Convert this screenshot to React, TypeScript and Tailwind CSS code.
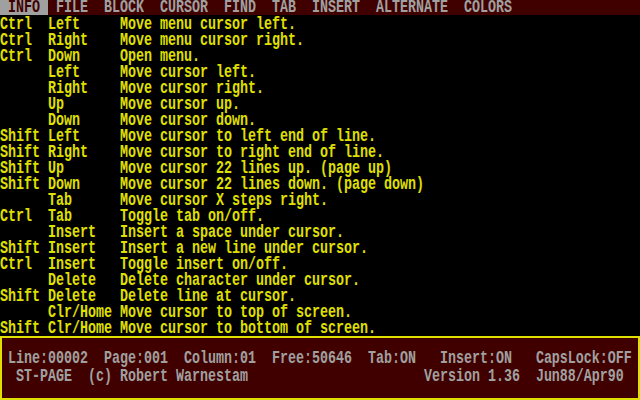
import React from "react";

const lines: string[] = [
  "Ctrl  Left     Move menu cursor left.",
  "Ctrl  Right    Move menu cursor right.",
  "Ctrl  Down     Open menu.",
  "      Left     Move cursor left.",
  "      Right    Move cursor right.",
  "      Up       Move cursor up.",
  "      Down     Move cursor down.",
  "Shift Left     Move cursor to left end of line.",
  "Shift Right    Move cursor to right end of line.",
  "Shift Up       Move cursor 22 lines up. (page up)",
  "Shift Down     Move cursor 22 lines down. (page down)",
  "      Tab      Move cursor X steps right.",
  "Ctrl  Tab      Toggle tab on/off.",
  "      Insert   Insert a space under cursor.",
  "Shift Insert   Insert a new line under cursor.",
  "Ctrl  Insert   Toggle insert on/off.",
  "      Delete   Delete character under cursor.",
  "Shift Delete   Delete line at cursor.",
  "      Clr/Home Move cursor to top of screen.",
  "Shift Clr/Home Move cursor to bottom of screen.",
];

const menuRest = "FILE  BLOCK  CURSOR  FIND  TAB  INSERT  ALTERNATE  COLORS";

const status1 =
  " Line:00002  Page:001  Column:01  Free:50646  Tab:ON   Insert:ON   CapsLock:OFF";
const status2 =
  "  ST-PAGE  (c) Robert Warnestam                      Version 1.36  Jun88/Apr90";

function Line({ text, cls }: { text: string; cls: string }) {
  return (
    <div className={"h-4 flex items-center whitespace-pre " + cls}>
      <span className="inline-block leading-[11px] scale-y-[1.35] origin-center">{text}</span>
    </div>
  );
}

export default function App() {
  return (
    <div
      className="w-[640px] h-[400px] bg-black overflow-hidden flex flex-col font-bold text-[13.333px]"
      style={{ fontFamily: '"Liberation Mono", monospace' }}
    >
      <div className="h-[15px] mb-px bg-[#400000] flex whitespace-pre">
        <div className="w-12 h-full bg-[#a0a0a0] text-[#400000] flex items-center">
          <span className="inline-block leading-[10px] scale-y-[1.35]">{" INFO "}</span>
        </div>
        <div className="h-full text-[#a0a0a0] flex items-center">
          <span className="inline-block leading-[10px] scale-y-[1.35]">{" " + menuRest}</span>
        </div>
      </div>
      <div className="flex flex-col">
        {lines.map((l, i) => (
          <Line key={i} text={l} cls="text-[#e0e000]" />
        ))}
      </div>
      <div className="flex-1 bg-[#400000] shadow-[inset_0_0_0_2px_#e0e000] pt-[14px] flex flex-col gap-[2px]">
        <Line text={status1} cls="text-[#a0a0a0]" />
        <Line text={status2} cls="text-[#a0a0a0]" />
      </div>
    </div>
  );
}
